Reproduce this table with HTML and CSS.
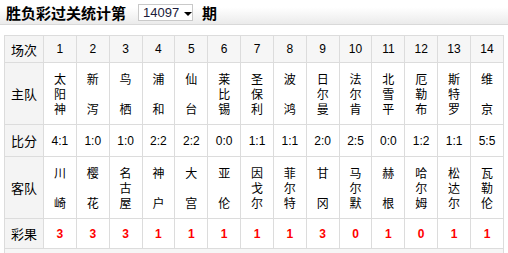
FILE: index.html
```html
<!DOCTYPE html>
<html lang="zh-CN">
<head>
<meta charset="utf-8">
<link rel="stylesheet" href="styles.css">
</head>
<body>
<div class="head">
  <span class="title">胜负彩过关统计第</span>
  <span class="select"><span class="sel-val">14097</span><span class="caret"></span></span>
  <span class="title">期</span>
</div>
<table class="grid">
  <colgroup><col class="c0"><col span="14"></colgroup>
  <tr class="r-head">
    <td class="lab">场次</td><td>1</td><td>2</td><td>3</td><td>4</td><td>5</td><td>6</td><td>7</td><td>8</td><td>9</td><td>10</td><td>11</td><td>12</td><td>13</td><td>14</td>
  </tr>
  <tr class="r-team">
    <td class="lab">主队</td>
    <td>太<br>阳<br>神</td><td>新<br><br>泻</td><td>鸟<br><br>栖</td><td>浦<br><br>和</td><td>仙<br><br>台</td><td>莱<br>比<br>锡</td><td>圣<br>保<br>利</td><td>波<br><br>鸿</td><td>日<br>尔<br>曼</td><td>法<br>尔<br>肯</td><td>北<br>雪<br>平</td><td>厄<br>勒<br>布</td><td>斯<br>特<br>罗</td><td>维<br><br>京</td>
  </tr>
  <tr class="r-score">
    <td class="lab">比分</td><td>4:1</td><td>1:0</td><td>1:0</td><td>2:2</td><td>2:2</td><td>0:0</td><td>1:1</td><td>1:1</td><td>2:0</td><td>2:5</td><td>0:0</td><td>1:2</td><td>1:1</td><td>5:5</td>
  </tr>
  <tr class="r-team">
    <td class="lab">客队</td>
    <td>川<br><br>崎</td><td>樱<br><br>花</td><td>名<br>古<br>屋</td><td>神<br><br>户</td><td>大<br><br>宫</td><td>亚<br><br>伦</td><td>因<br>戈<br>尔</td><td>菲<br>尔<br>特</td><td>甘<br><br>冈</td><td>马<br>尔<br>默</td><td>赫<br><br>根</td><td>哈<br>尔<br>姆</td><td>松<br>达<br>尔</td><td>瓦<br>勒<br>伦</td>
  </tr>
  <tr class="r-res">
    <td class="lab">彩果</td><td>3</td><td>3</td><td>3</td><td>1</td><td>1</td><td>1</td><td>1</td><td>1</td><td>3</td><td>0</td><td>1</td><td>0</td><td>1</td><td>1</td>
  </tr>
  <tr class="r-foot"><td colspan="15"></td></tr>
</table>
</body>
</html>
```
FILE: styles.css
```css
html, body {
  margin: 0;
  padding: 0;
  background: #fff;
}
body {
  font-family: "Liberation Sans", "Noto Sans CJK SC", sans-serif;
  color: #000;
}
.head {
  height: 25px;
  border-bottom: 1px solid #d9d9d9;
  background: linear-gradient(#ffffff 0%, #ffffff 30%, #ebebeb 100%);
  display: flex;
  align-items: center;
  padding-left: 6px;
  box-sizing: border-box;
}
.title {
  font-family: "Noto Sans CJK SC", sans-serif;
  font-weight: bold;
  font-size: 15px;
  line-height: 17px;
}
.select {
  display: inline-flex;
  align-items: center;
  width: 55px;
  height: 17px;
  box-sizing: border-box;
  border: 1px solid #c9c9c9;
  background: #fff;
  margin: 0 9px 0 12px;
  padding-left: 4px;
}
.sel-val {
  font-size: 13px;
  color: #1b1b3a;
  line-height: 15px;
}
.caret {
  width: 0;
  height: 0;
  border-left: 4px solid transparent;
  border-right: 4px solid transparent;
  border-top: 4px solid #000;
  margin-left: 5px;
  margin-top: 3px;
}
.grid {
  margin: 10px 0 0 4px;
  width: 500px;
  table-layout: fixed;
  border-collapse: collapse;
  font-size: 12px;
}
.c0 { width: 39px; }
.grid td {
  border: 1px solid #dcdcdc;
  text-align: center;
  vertical-align: middle;
  padding: 0;
  font-family: "Liberation Sans", "Noto Sans CJK SC", sans-serif;
  font-size: 12px;
}
.grid td.lab {
  background: #f4f4f4;
  font-family: "Noto Sans CJK SC", sans-serif;
  font-size: 13px;
}
.r-head td {
  background: #f6f6f6;
  height: 26px;
}
.r-team td {
  height: 61px;
  line-height: 15px;
  font-family: "Noto Sans CJK SC", sans-serif;
  font-size: 12px;
}
.r-score td { height: 31px; }
.r-res td {
  height: 29px;
  color: #ff0000;
  font-weight: bold;
}
.r-res td.lab {
  color: #000;
  font-weight: normal;
}
.r-foot td {
  height: 10px;
  background: #f6f6f6;
}
```
